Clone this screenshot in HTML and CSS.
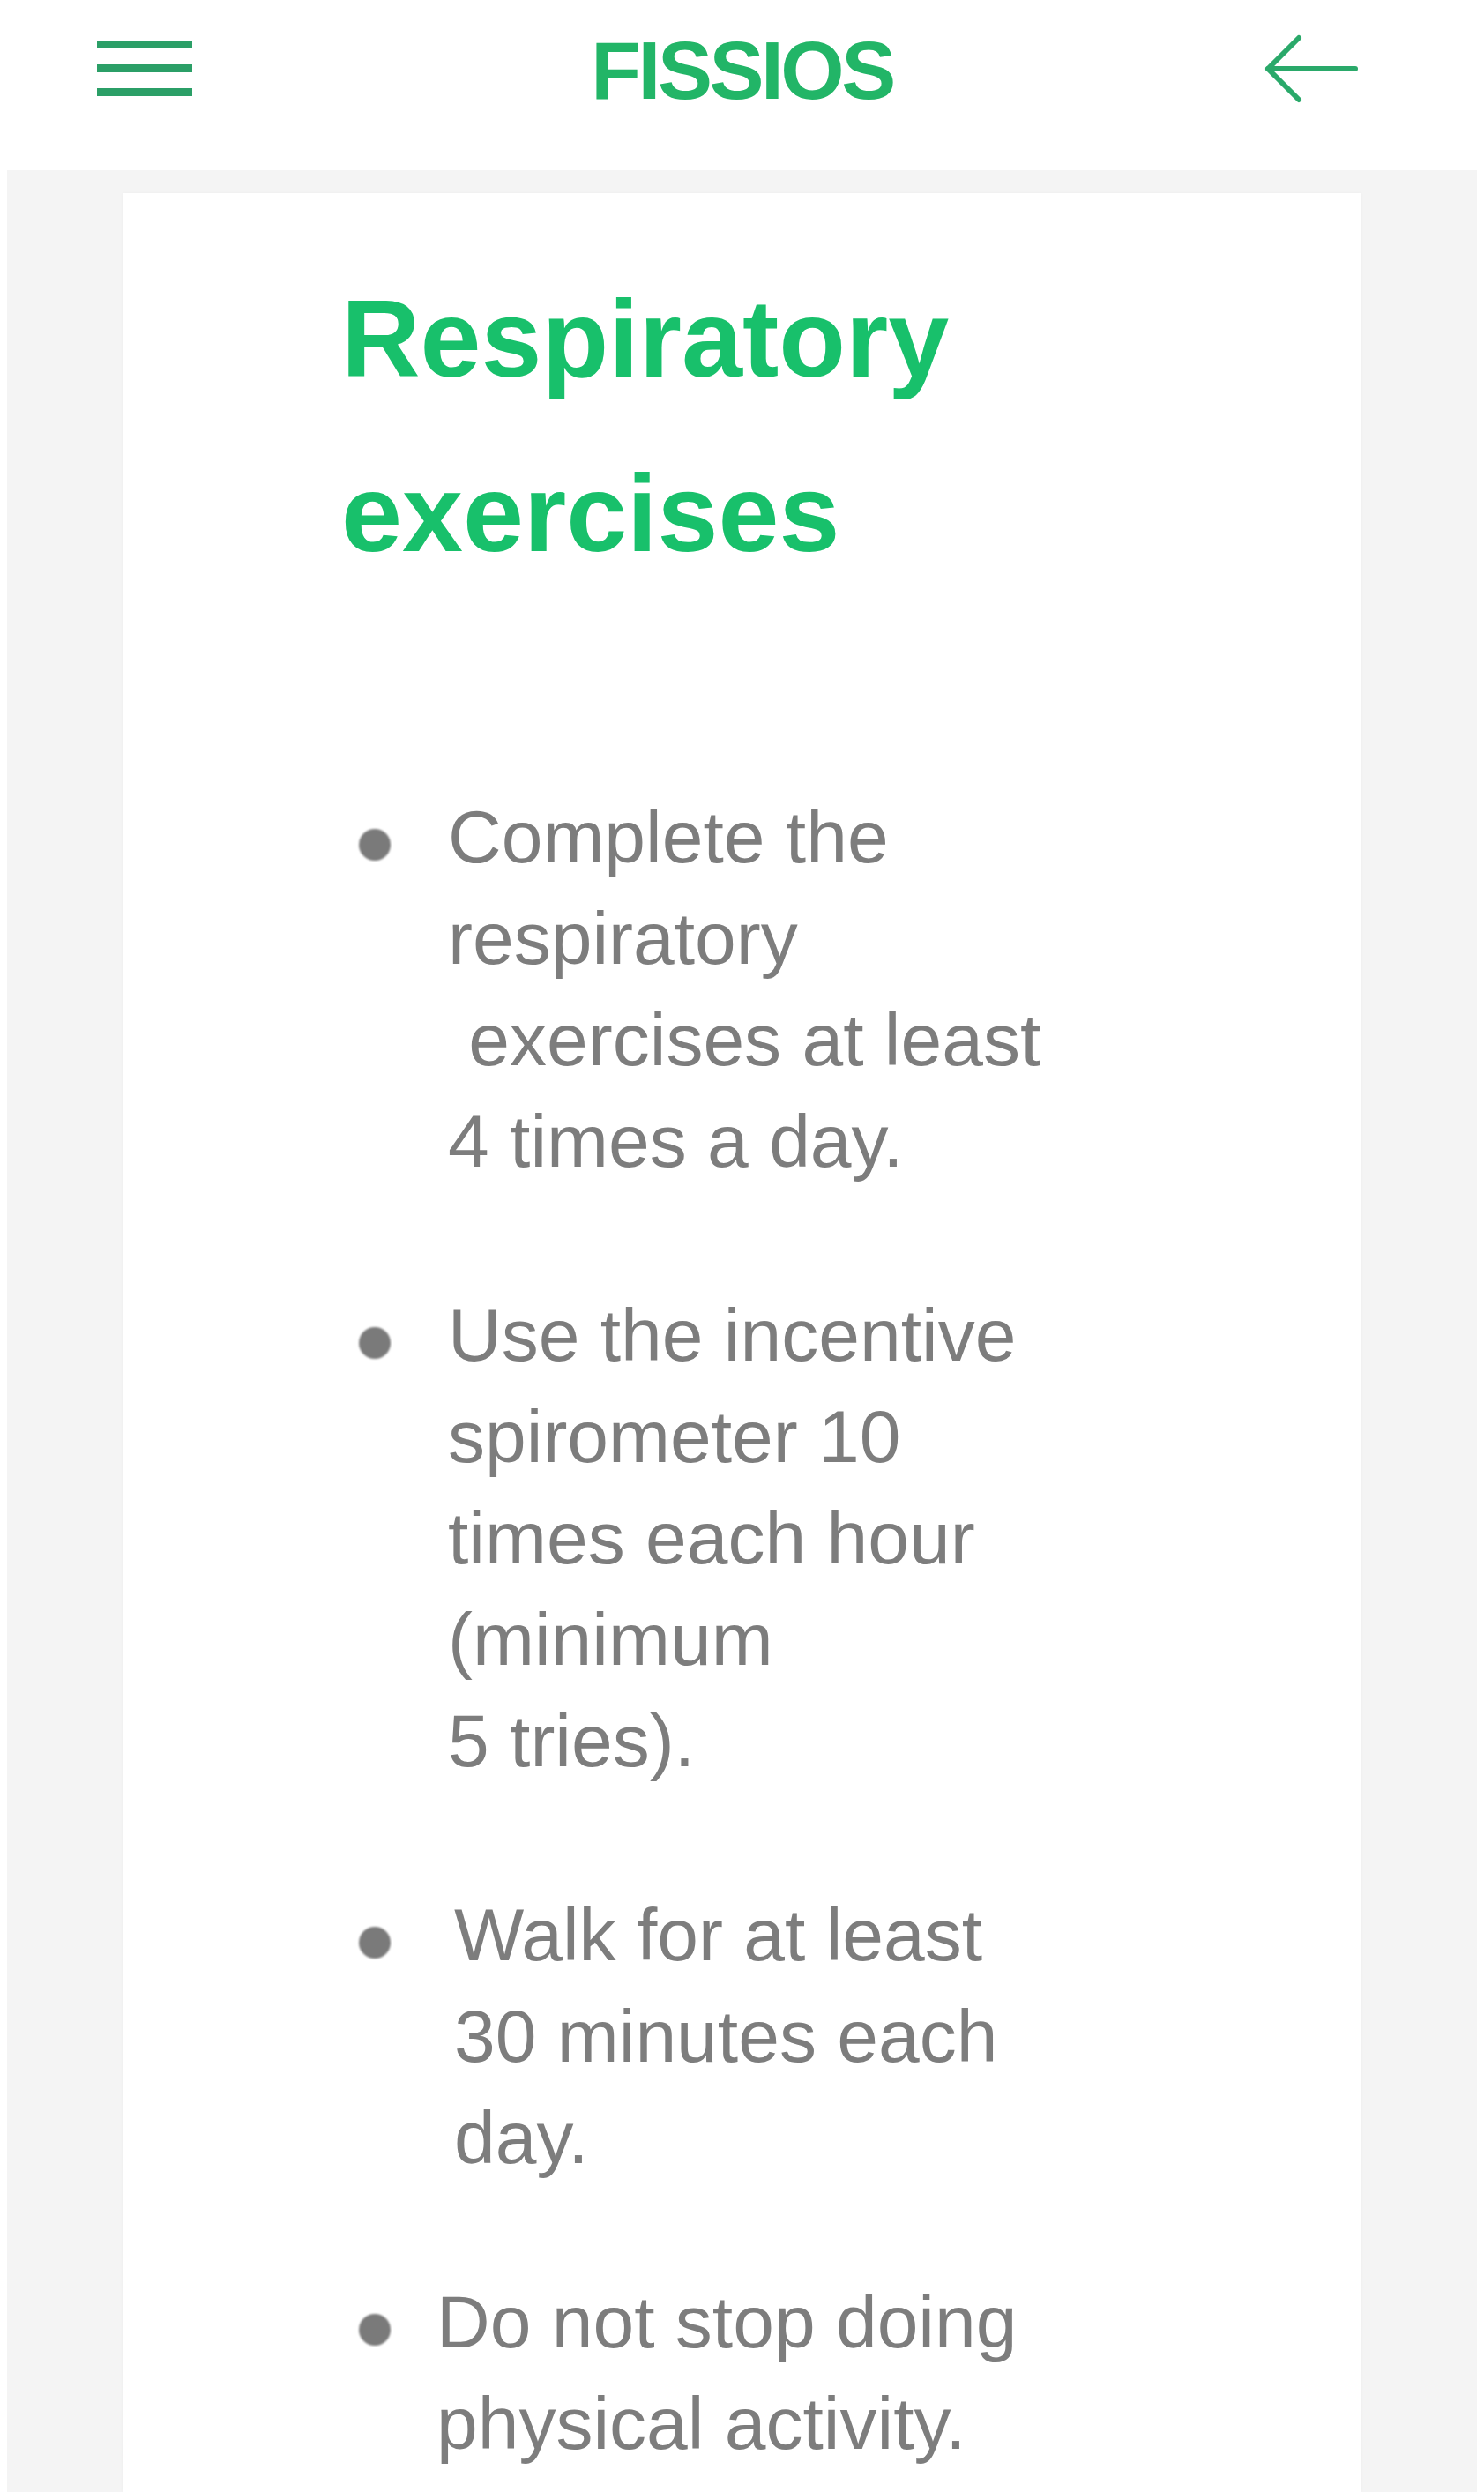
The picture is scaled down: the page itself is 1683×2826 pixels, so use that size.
FILE: index.html
```html
<!DOCTYPE html>
<html lang="en">
<head>
<meta charset="utf-8">
<title>FISSIOS - Respiratory exercises</title>
<link rel="stylesheet" href="styles.css">
</head>
<body>
<header class="topbar">
  <div class="topbar-row">
    <button class="icon-btn menu-btn" aria-label="Menu">
      <svg width="108" height="64" viewBox="0 0 108 64" aria-hidden="true">
        <g stroke="currentColor" stroke-width="9" stroke-linecap="butt">
          <line x1="0" y1="4.5" x2="108" y2="4.5"/>
          <line x1="0" y1="31.5" x2="108" y2="31.5"/>
          <line x1="0" y1="58.5" x2="108" y2="58.5"/>
        </g>
      </svg>
    </button>
    <div class="logo">FISSIOS</div>
    <button class="icon-btn back-btn" aria-label="Back">
      <svg width="106" height="78" viewBox="0 0 106 78" aria-hidden="true">
        <g fill="none" stroke="currentColor" stroke-width="6" stroke-linecap="round" stroke-linejoin="round">
          <path d="M103 39 H4"/>
          <path d="M39 4 L4 39 L39 74"/>
        </g>
      </svg>
    </button>
  </div>
</header>
<main class="page">
  <section class="card">
    <h1 class="title">Respiratory<br>exercises</h1>
    <ul class="tips">
      <li class="tip tip-first">
        <span class="dot"></span>
        <p class="tip-text">Complete the<br>respiratory<br>&nbsp;exercises at least<br>4 times a day.</p>
      </li>
      <li class="tip tip-second">
        <span class="dot"></span>
        <p class="tip-text">Use the incentive<br>spirometer 10<br>times each hour<br>(minimum<br>5 tries).</p>
      </li>
      <li class="tip tip-third">
        <span class="dot"></span>
        <p class="tip-text">Walk for at least<br>30 minutes each<br>day.</p>
      </li>
      <li class="tip tip-fourth">
        <span class="dot"></span>
        <p class="tip-text">Do not stop doing<br>physical activity.</p>
      </li>
    </ul>
  </section>
</main>
</body>
</html>
```

FILE: styles.css
```css
html, body {
  margin: 0;
  padding: 0;
  background: #ffffff;
}

body {
  font-family: "Liberation Sans", Arial, Helvetica, sans-serif;
  overflow: hidden;
}

.topbar {
  background: #ffffff;
  padding-bottom: 38px;
}

.topbar-row {
  height: 155px;
  display: grid;
  grid-template-columns: 1fr auto 1fr;
  align-items: center;
}

.icon-btn {
  background: none;
  border: 0;
  padding: 0;
  margin: 0;
  display: flex;
  cursor: pointer;
}

.menu-btn {
  justify-self: start;
  margin-left: 110px;
  color: #2b9f67;
}

.back-btn {
  justify-self: end;
  margin-right: 143px;
  color: #2aa96a;
}

.logo {
  font-weight: 700;
  font-size: 93px;
  letter-spacing: -3.5px;
  color: #22b567;
  padding-top: 5px;
  line-height: normal;
}

.page {
  margin: 0 8px;
  background: #f4f4f4;
  padding: 26px 131px 0 131px;
  min-height: 2607px;
  display: flex;
  flex-direction: column;
}

.card {
  flex: 1;
  background: #ffffff;
  box-shadow: 0 0 3px rgba(0, 0, 0, 0.03);
  padding: 66px 0 0 248px;
}

.title {
  margin: 0;
  font-weight: 700;
  font-size: 124px;
  line-height: 198px;
  color: #18c06b;
}

.tips {
  list-style: none;
  margin: 211px 0 0 20px;
  padding: 0;
}

.tip {
  display: flex;
  align-items: flex-start;
}

.dot {
  flex: none;
  width: 36px;
  height: 36px;
  border-radius: 50%;
  background: #7a7a7a;
  margin-top: 48px;
  filter: blur(0.8px);
}

.tip-text {
  margin: 0 0 0 65px;
  font-size: 84px;
  line-height: 115px;
  color: #7d7d7d;
  white-space: nowrap;
}

.tip-first,
.tip-second {
  margin-bottom: 105px;
}

.tip-third {
  margin-bottom: 94px;
}

.tip-third .tip-text {
  margin-left: 72px;
}

.tip-fourth .tip-text {
  margin-left: 52px;
}
```
